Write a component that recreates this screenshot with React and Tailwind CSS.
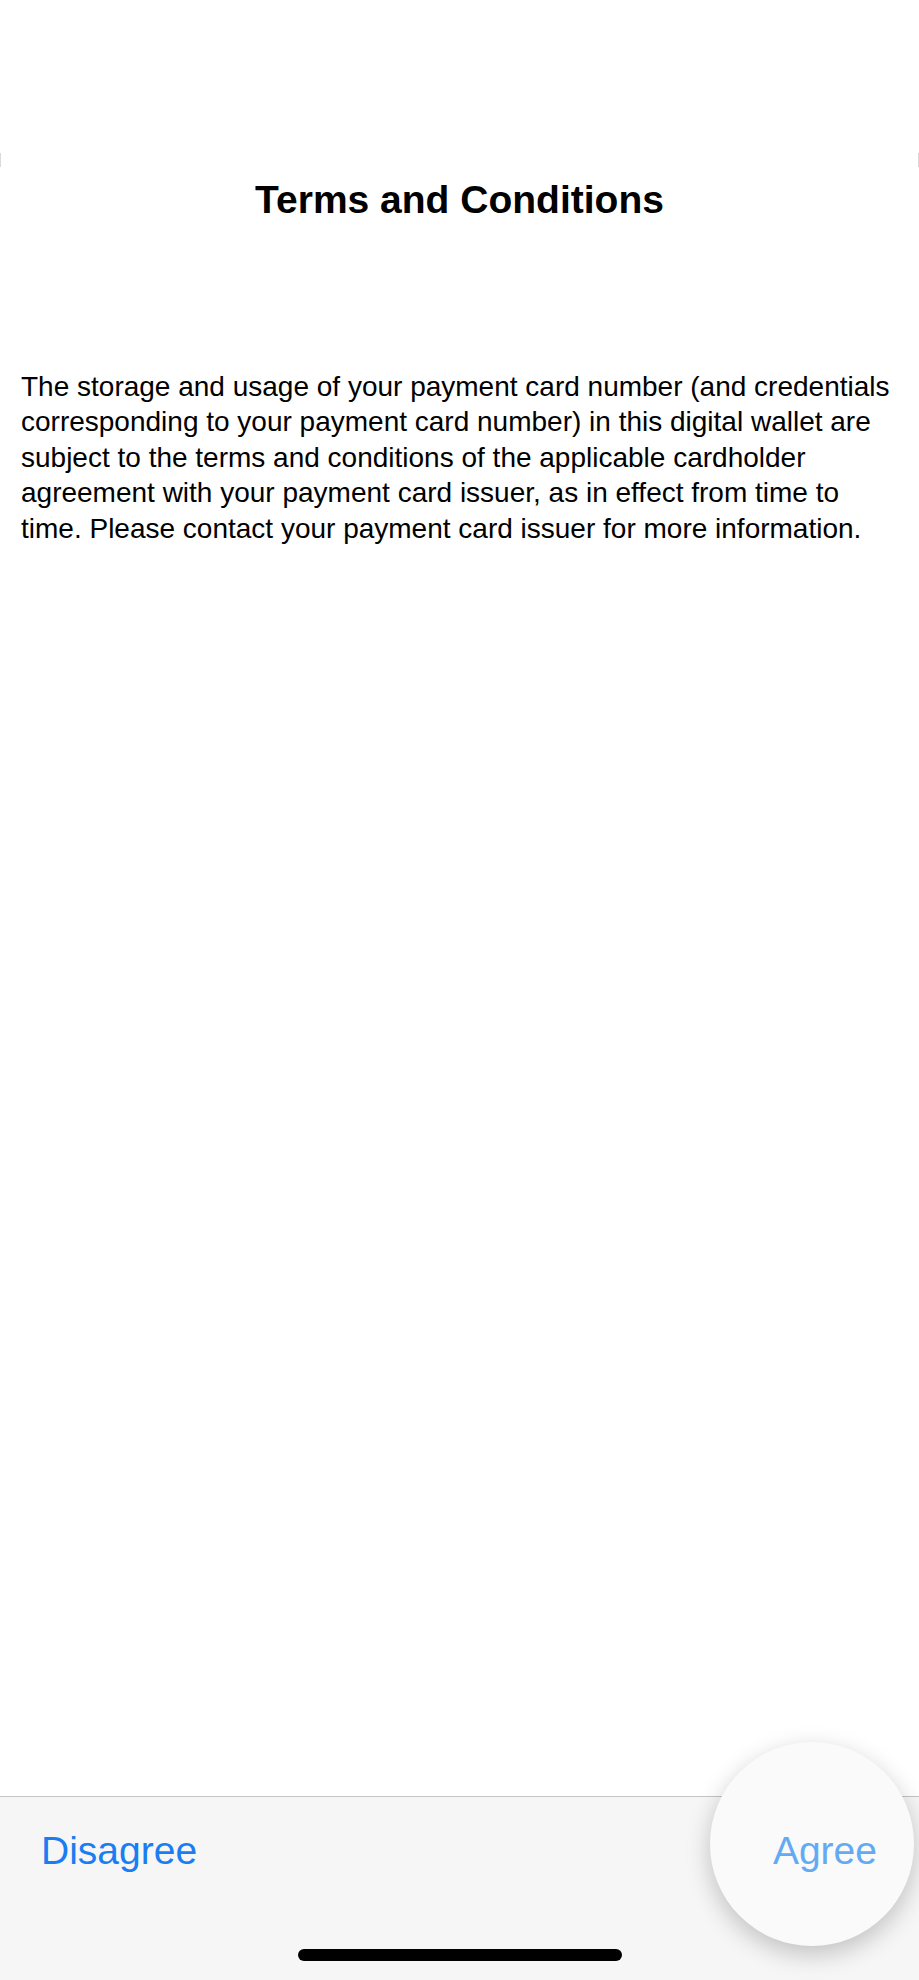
export default function App() {
  return (
    <div className="w-[919px] h-[1980px] flex flex-col bg-white font-['Liberation_Sans',Arial,sans-serif] overflow-hidden">
      {/* sheet top edge */}
      <div className="h-[177px] flex justify-between items-end pb-[10px]">
        <div className="w-px h-[14px] bg-[#dadada]" />
        <div className="w-px h-[14px] bg-[#dadada]" />
      </div>

      <h1 className="text-center text-[39px] leading-[46px] font-bold text-black">Terms and Conditions</h1>

      <div className="pt-[146px] px-[21px]">
        <p className="text-[28px] leading-[35.4px] text-black">
          The storage and usage of your payment card number (and credentials corresponding to your payment card number) in this digital wallet are subject to the terms and conditions of the applicable cardholder agreement with your payment card issuer, as in effect from time to time. Please contact your payment card issuer for more information.
        </p>
      </div>

      <div className="flex-1" />

      <div className="relative h-[184px] border-t border-[#c4c4c4] bg-[#f6f6f6] flex flex-col">
        {/* touch highlight behind Agree */}
        <div className="absolute left-[710px] top-[-55px] w-[204px] h-[204px] rounded-full bg-[#fafafa] shadow-[0_8px_24px_rgba(0,0,0,0.22)]" />
        <div className="relative h-[106px] flex items-center justify-between pl-[41px] pr-[42px]">
          <button className="text-[39px] leading-none text-[#1a7df1]">Disagree</button>
          <button className="text-[39px] leading-none text-[#64aaf3]">Agree</button>
        </div>
        <div className="flex-1 flex justify-center pt-[46px]">
          <div className="w-[324px] h-[12px] rounded-full bg-black" />
        </div>
      </div>
    </div>
  );
}
